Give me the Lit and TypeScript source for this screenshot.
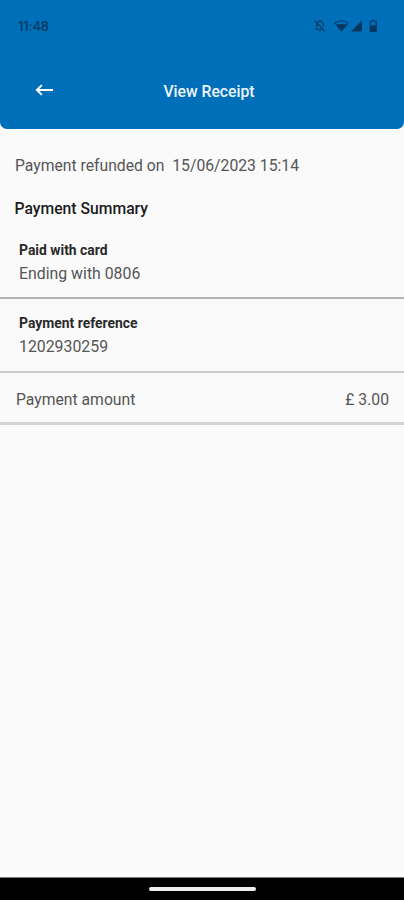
import { LitElement, html, css } from "lit";
import { customElement } from "lit/decorators.js";

@customElement("app-root")
export class AppRoot extends LitElement {
  static styles = css`
    :host {
      display: flex;
      flex-direction: column;
      height: 900px;
      background: #fafafa;
      color: #555;
      font: 400 15.73px/20px Roboto, sans-serif;
    }
    header {
      height: 129px;
      box-sizing: border-box;
      background: #006fba;
      border-radius: 0 0 7px 7px;
    }
    .status {
      height: 52px;
      box-sizing: border-box;
      padding: 0 23px 0 18px;
      display: flex;
      align-items: center;
      justify-content: space-between;
      color: #06385f;
      font: 500 13px/16px "Inter", sans-serif;
      letter-spacing: -0.1px;
    }
    .icons {
      display: block;
    }
    .bar {
      height: 77px;
      display: grid;
      grid-template-columns: 88px 1fr 74px;
      align-items: center;
      color: #eef6fc;
    }
    .back {
      margin: -2px 0 0 34px;
    }
    .title {
      padding-top: 2px;
      text-align: center;
      font-weight: 500;
    }
    main {
      flex: 1;
    }
    .refund {
      padding: 27px 15px 0;
      white-space: pre;
    }
    .summary {
      margin: 0;
      padding: 23px 15px 0 14.5px;
      font: 500 15.73px/20px Roboto, sans-serif;
      color: #1c1c1c;
    }
    .item {
      padding: 14px 19px 13px;
      border-bottom: 2px solid #b3b3b3;
    }
    .first {
      padding-top: 21px;
      padding-bottom: 12px;
    }
    .item + .item {
      border-color: #cacaca;
    }
    .label {
      font-size: 13.9px;
      font-weight: 700;
      color: #2a2a2a;
      line-height: 20px;
    }
    .value {
      font-size: 15.85px;
      line-height: 23px;
      padding-top: 2px;
    }
    .total {
      display: flex;
      justify-content: space-between;
      padding: 17px 15px 12px 16px;
      border-bottom: 3px solid #d4d4d4;
    }
    .nav {
      height: 23px;
      box-sizing: border-box;
      background: #000;
      border-top: 1px solid #777;
      display: flex;
      justify-content: center;
      padding-top: 9px;
    }
    .pill {
      width: 107px;
      height: 4px;
      border-radius: 2px;
      background: #eee;
    }
  `;

  render() {
    return html`
      <header>
        <div class="status"><span>11:48</span><svg class="icons" width="68" height="16" viewBox="0 0 68 16" fill="none" stroke="#06385f">
            <path d="M3.6 11V7.2C3.6 5 4.8 3.5 6.5 3.3V2.5H7.5V3.3C9.2 3.6 10.3 5 10.3 7.2V9M2.2 11.3H9.5M6 13H8M1.5 2.5L12 13.3" stroke-width="1.1"/>
            <path d="M22 5.2Q28.5 .2 35 5.2L28.5 13Z" stroke-width="1.1"/>
            <path d="M23.5 6.6Q28.5 5.2 33.5 6.6L28.5 13Z" fill="#06385f" stroke="none"/>
            <path d="M38 13.5L49 2.5V13.5Z" fill="#06385f" stroke="none"/>
            <path d="M57.2 3.5H59V2.2H61.3V3.5H63.2V13.5H57.2Z" stroke-width="1.1"/>
            <path d="M57 7.3H63.4V13.6H57Z" fill="#06385f" stroke="none"/>
          </svg></div>
        <div class="bar"><svg class="back" width="20" height="14" viewBox="0 0 20 14" fill="none" stroke="#fff" stroke-width="2"><path d="M19 7H3M7.8 2.1L2.9 7L7.8 11.9"/></svg><span class="title">View Receipt</span></div>
      </header>
      <main>
        <div class="refund">Payment refunded on  15/06/2023 15:14</div>
        <h2 class="summary">Payment Summary</h2>
        <section class="item first"><div class="label">Paid with card</div><div class="value">Ending with 0806</div></section>
        <section class="item"><div class="label">Payment reference</div><div class="value">1202930259</div></section>
        <div class="total"><span>Payment amount</span><span>£ 3.00</span></div>
      </main>
      <div class="nav"><div class="pill"></div></div>
    `;
  }
}
